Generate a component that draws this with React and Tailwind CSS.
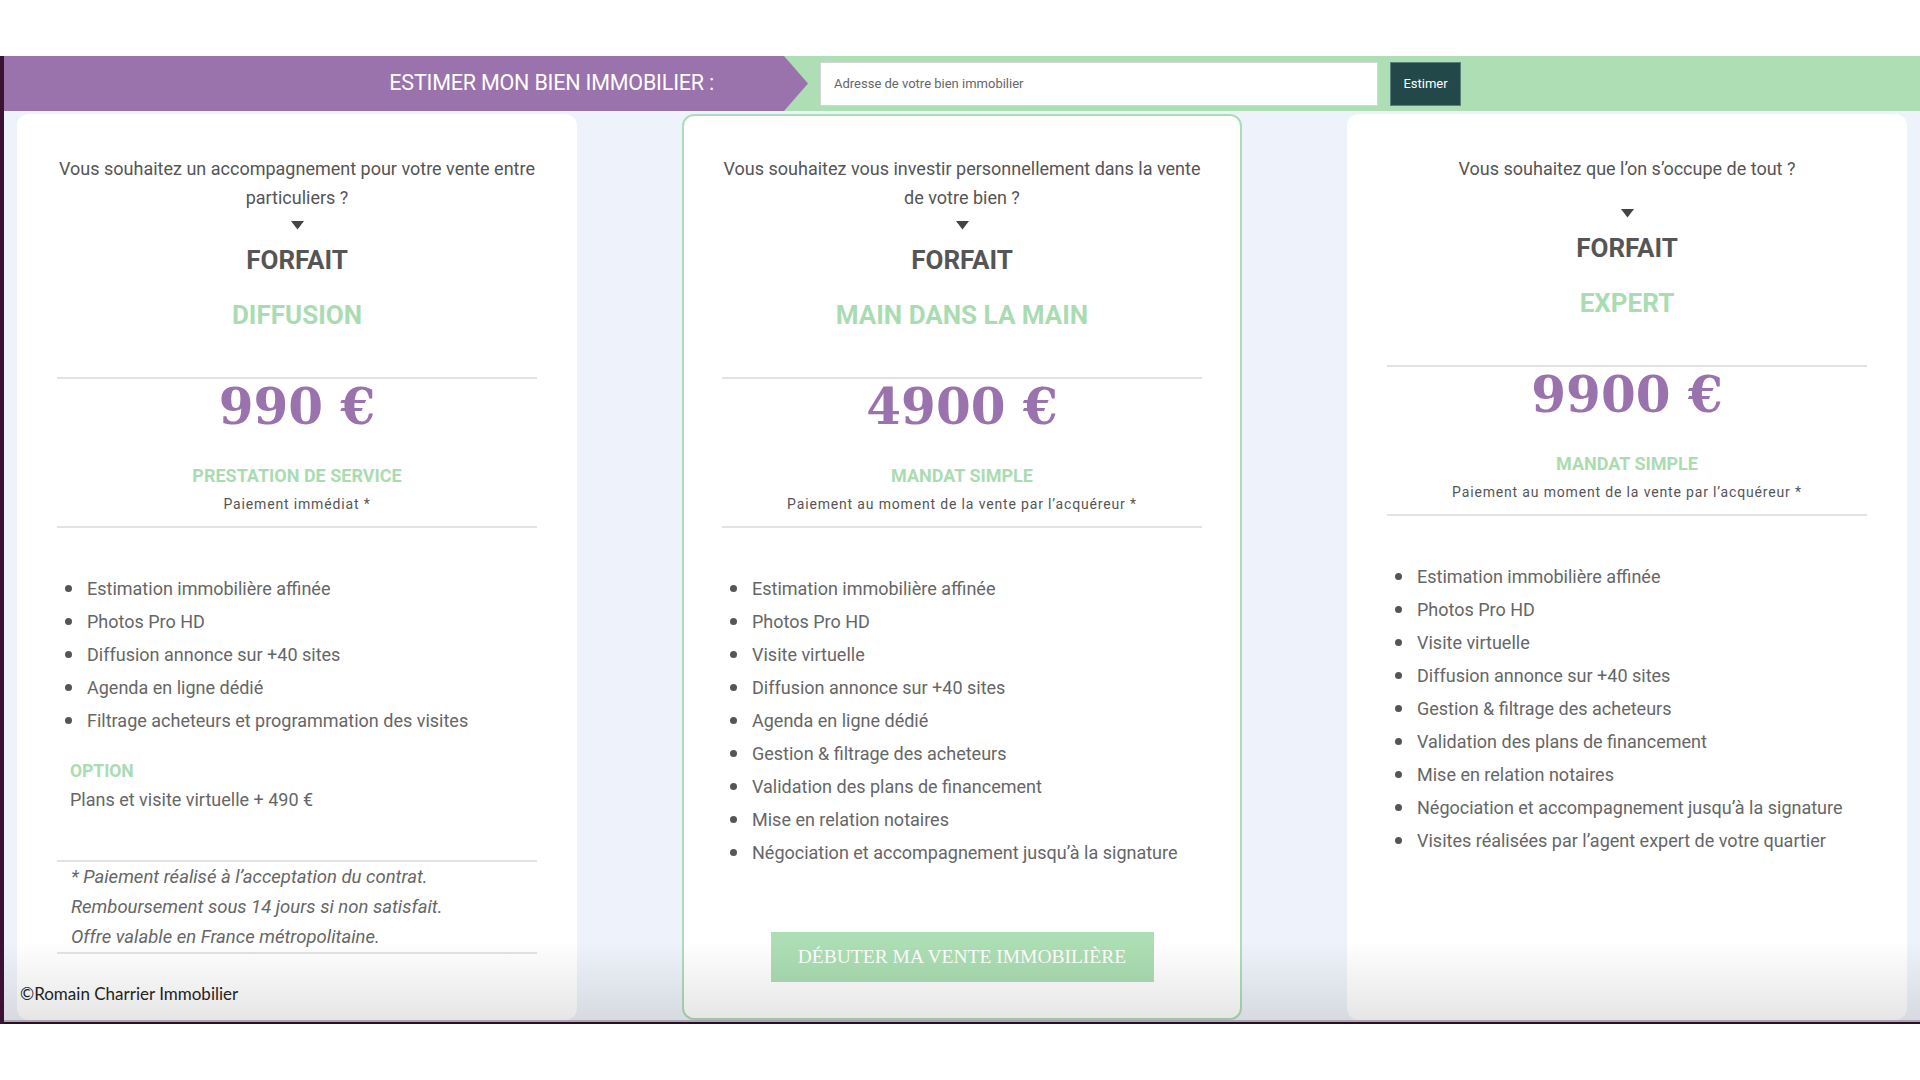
const plans = [
  {
    question: ["Vous souhaitez un accompagnement pour votre vente entre", "particuliers ?"],
    name: "DIFFUSION",
    price: "990 €",
    type: "PRESTATION DE SERVICE",
    payment: "Paiement immédiat *",
    features: [
      "Estimation immobilière affinée",
      "Photos Pro HD",
      "Diffusion annonce sur +40 sites",
      "Agenda en ligne dédié",
      "Filtrage acheteurs et programmation des visites",
    ],
    option: "Plans et visite virtuelle + 490 €",
    notes: [
      "* Paiement réalisé à l’acceptation du contrat.",
      "Remboursement sous 14 jours si non satisfait.",
      "Offre valable en France métropolitaine.",
    ],
  },
  {
    question: ["Vous souhaitez vous investir personnellement dans la vente", "de votre bien ?"],
    name: "MAIN DANS LA MAIN",
    price: "4900 €",
    type: "MANDAT SIMPLE",
    payment: "Paiement au moment de la vente par l’acquéreur *",
    features: [
      "Estimation immobilière affinée",
      "Photos Pro HD",
      "Visite virtuelle",
      "Diffusion annonce sur +40 sites",
      "Agenda en ligne dédié",
      "Gestion & filtrage des acheteurs",
      "Validation des plans de financement",
      "Mise en relation notaires",
      "Négociation et accompagnement jusqu’à la signature",
    ],
    highlighted: true,
  },
  {
    question: ["Vous souhaitez que l’on s’occupe de tout ?"],
    name: "EXPERT",
    price: "9900 €",
    type: "MANDAT SIMPLE",
    payment: "Paiement au moment de la vente par l’acquéreur *",
    features: [
      "Estimation immobilière affinée",
      "Photos Pro HD",
      "Visite virtuelle",
      "Diffusion annonce sur +40 sites",
      "Gestion & filtrage des acheteurs",
      "Validation des plans de financement",
      "Mise en relation notaires",
      "Négociation et accompagnement jusqu’à la signature",
      "Visites réalisées par l’agent expert de votre quartier",
    ],
  },
];

function PlanCard({ plan }) {
  return (
    <article
      className={
        "w-[560px] shrink-0 rounded-[12px] bg-white text-center " +
        (plan.highlighted ? "border-2 border-[#acdeb3] px-[38px] pt-[38px]" : "px-[40px] pt-[40px]")
      }
    >
      <p className="min-h-[46px] text-[18px] leading-[29px] text-[#555]">
        {plan.question.map((line, i) => (
          <span key={i} className="block whitespace-nowrap">
            {line}
          </span>
        ))}
      </p>

      <div className="mt-[8px] flex justify-center">
        <svg width="13" height="10" viewBox="0 0 13 10">
          <path d="M0 1h13L6.5 9.5z" fill="#444" />
        </svg>
      </div>

      <h3 className="mt-[15px] text-[26px] font-bold leading-[30px] text-[#555]">FORFAIT</h3>
      <h4 className="mt-[25px] text-[26px] font-bold leading-[30px] text-[#aadcb2]">{plan.name}</h4>

      <hr className="mt-[47px] border-t-2 border-[#e3e3e3]" />

      <p className="mt-[3px] h-[50px] font-['DejaVu_Serif',serif] text-[50px] font-bold leading-[50px] text-[#9a72ad] oldstyle-nums">
        {plan.price}
      </p>

      <p className="mt-[32px] text-[18px] font-bold leading-[24px] text-[#aadcb2]">{plan.type}</p>
      <p className="mt-[6px] text-[14px] leading-[20px] tracking-[0.06em] text-[#555]">{plan.payment}</p>

      <hr className="mt-[12px] border-t-2 border-[#e3e3e3]" />

      <ul className="mt-[44px] text-left">
        {plan.features.map((f) => (
          <li key={f} className="flex items-center gap-[15px] text-[18px] leading-[33px] text-[#666]">
            <span className="ml-[8px] h-[7px] w-[7px] shrink-0 rounded-full bg-[#555]" />
            {f}
          </li>
        ))}
      </ul>

      {plan.option && (
        <div className="pl-[13px] text-left">
          <p className="mt-[22px] text-[17.5px] font-bold leading-[24px] text-[#aadcb2]">OPTION</p>
          <p className="mt-[2px] text-[18px] leading-[30px] text-[#666]">{plan.option}</p>
        </div>
      )}

      {plan.notes && (
        <div className="mt-[45px] border-y-2 border-[#e3e3e3] pl-[14px] text-left">
          {plan.notes.map((n) => (
            <p key={n} className="text-[18.5px] italic leading-[30px] text-[#666]">
              {n}
            </p>
          ))}
        </div>
      )}

      {plan.highlighted && (
        <button className="mx-auto mt-[63px] flex h-[50px] w-[383px] items-center justify-center bg-[#acdeb3] font-['Liberation_Serif',serif] text-[19.5px] text-white">
          DÉBUTER MA VENTE IMMOBILIÈRE
        </button>
      )}
    </article>
  );
}

export default function App() {
  return (
    <div className="min-h-screen bg-white pt-[56px] font-['Roboto',sans-serif]">
      <div className="flex">
        <div className="w-[4px] shrink-0 bg-[#3a1233]" />

        <div className="flex flex-1 flex-col">
          <header className="flex h-[55px] items-center bg-[#aedfb4]">
            <div className="flex h-full w-[804px] items-center justify-end bg-[#9a72ac] pr-[94px] [clip-path:polygon(0_0,780px_0,100%_50%,780px_100%,0_100%)]">
              <span className="text-[21.5px] tracking-[-0.2px] text-white">
                ESTIMER MON BIEN IMMOBILIER :
              </span>
            </div>
            <input
              className="ml-[12px] h-[44px] w-[558px] border border-[#d5d5d5] bg-white px-[13px] text-[13px] text-[#555] placeholder:text-[#666] outline-none"
              placeholder="Adresse de votre bien immobilier"
            />
            <button className="ml-[12px] h-[44px] w-[71px] border border-[#5b7f7c] bg-[#234849] text-[13px] text-white">
              Estimer
            </button>
          </header>

          <main className="relative flex h-[909px] gap-[105px] overflow-hidden bg-[#eef2fa] px-[13px] pt-[3px]">
            {plans.map((p) => (
              <PlanCard key={p.name} plan={p} />
            ))}

            <div className="pointer-events-none absolute inset-x-0 bottom-0 h-[80px] bg-linear-to-b from-transparent to-black/10" />
            <span className="absolute bottom-[14px] left-[16px] font-['Lato',sans-serif] text-[17px] text-[#222]">
              ©Romain Charrier Immobilier
            </span>
          </main>

          <div className="h-[2px] bg-[#a9a9ad]" />
          <div className="h-[2px] bg-[#2d0c28]" />
        </div>
      </div>
    </div>
  );
}
